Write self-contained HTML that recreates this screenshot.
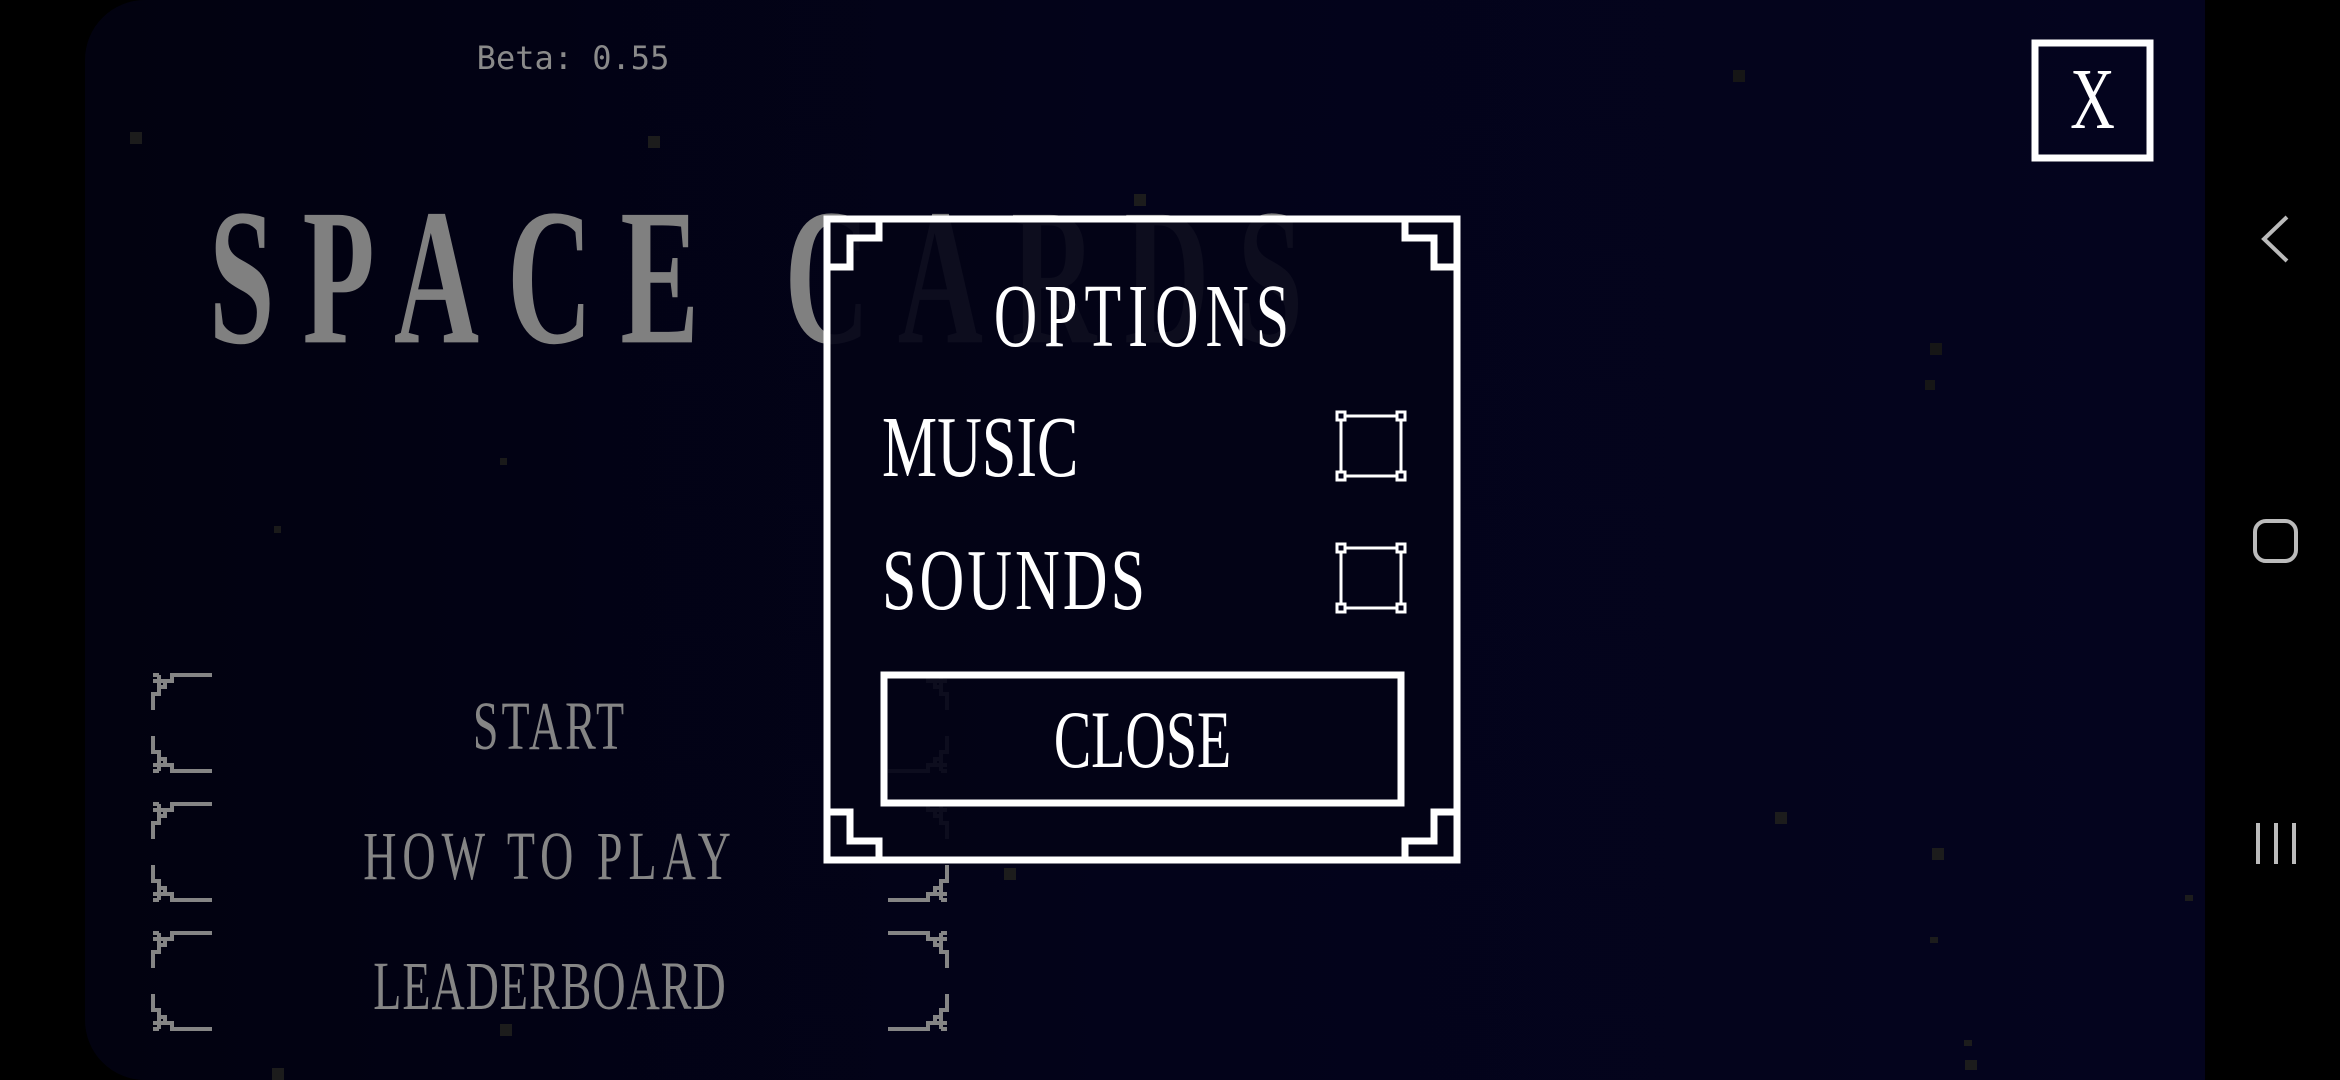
<!DOCTYPE html>
<html><head><meta charset="utf-8"><style>
*{margin:0;padding:0;box-sizing:border-box}
body{width:2340px;height:1080px;background:#000;position:relative;overflow:hidden;font-family:"Liberation Serif",serif}
#game{position:absolute;left:85px;top:0;width:2120px;height:1080px;background:linear-gradient(90deg,#020210 0%,#03031a 50%,#04041e 100%);border-radius:60px 0 0 60px}
.t{position:absolute;display:flex;align-items:center;justify-content:center;white-space:nowrap}
.t span{display:inline-block}
.star{position:absolute;background:#222;width:8px;height:8px}
</style></head><body>
<div id="game"></div>
<div class="star" style="left:130px;top:132px;width:12px;height:12px;background:#1c1c1c"></div>
<div class="star" style="left:648px;top:136px;width:12px;height:12px;background:#1c1c1c"></div>
<div class="star" style="left:1134px;top:194px;width:12px;height:12px;background:#1c1c1c"></div>
<div class="star" style="left:1733px;top:70px;width:12px;height:12px;background:#161616"></div>
<div class="star" style="left:1930px;top:343px;width:12px;height:12px;background:#161616"></div>
<div class="star" style="left:1925px;top:380px;width:10px;height:10px;background:#161616"></div>
<div class="star" style="left:274px;top:526px;width:7px;height:7px;background:#1a1a1a"></div>
<div class="star" style="left:500px;top:458px;width:7px;height:7px;background:#1a1a1a"></div>
<div class="star" style="left:1775px;top:812px;width:12px;height:12px;background:#1c1c1c"></div>
<div class="star" style="left:1932px;top:848px;width:12px;height:12px;background:#1c1c1c"></div>
<div class="star" style="left:1004px;top:868px;width:12px;height:12px;background:#1c1c1c"></div>
<div class="star" style="left:500px;top:1024px;width:12px;height:12px;background:#1c1c1c"></div>
<div class="star" style="left:272px;top:1068px;width:12px;height:12px;background:#1c1c1c"></div>
<div class="star" style="left:2185px;top:895px;width:8px;height:6px;background:#1c1c1c"></div>
<div class="star" style="left:1965px;top:1060px;width:12px;height:10px;background:#1c1c1c"></div>
<div class="star" style="left:1930px;top:937px;width:8px;height:6px;background:#1c1c1c"></div>
<div class="star" style="left:1964px;top:1040px;width:8px;height:6px;background:#1c1c1c"></div>

<div class="t" style="left:373px;top:38px;width:400px;height:40px;color:#8a8a8a;font-family:'DejaVu Sans Mono','Liberation Mono',monospace;font-size:32px">Beta: 0.55</div>

<div class="t" style="left:100px;top:218px;width:1340px;height:120px;color:#808080;font-size:118px;font-weight:bold;letter-spacing:28px"><span style="transform:scaleY(1.65)">SPACE CARDS</span></div>

<!-- menu -->
<div class="t" style="left:300px;top:700px;width:500px;height:50px;color:#858585;font-size:46px;letter-spacing:3px"><span style="transform:scaleY(1.5)">START</span></div>
<div class="t" style="left:250px;top:830px;width:600px;height:50px;color:#858585;font-size:46px;letter-spacing:6px"><span style="transform:scaleY(1.5)">HOW TO PLAY</span></div>
<div class="t" style="left:250px;top:960px;width:600px;height:50px;color:#858585;font-size:46px;letter-spacing:1px"><span style="transform:scaleY(1.5)">LEADERBOARD</span></div>

<svg style="position:absolute;left:0;top:0" width="2340" height="1080">
<defs><path id="bk" d="M62 3 H22 V9 H15 V15 H9 V22 H3 V38 M3 9 H15 M9 3 V15 M3 3 H9" fill="none" stroke="#858585" stroke-width="4"/></defs>
<g><use href="#bk" transform="translate(150,672)"/><use href="#bk" transform="translate(150,774) scale(1,-1)"/>
<use href="#bk" transform="translate(950,672) scale(-1,1)"/><use href="#bk" transform="translate(950,774) scale(-1,-1)"/></g>
<g><use href="#bk" transform="translate(150,801)"/><use href="#bk" transform="translate(150,903) scale(1,-1)"/>
<use href="#bk" transform="translate(950,801) scale(-1,1)"/><use href="#bk" transform="translate(950,903) scale(-1,-1)"/></g>
<g><use href="#bk" transform="translate(150,930)"/><use href="#bk" transform="translate(150,1032) scale(1,-1)"/>
<use href="#bk" transform="translate(950,930) scale(-1,1)"/><use href="#bk" transform="translate(950,1032) scale(-1,-1)"/></g>

<!-- dialog -->
<rect x="827" y="219" width="630" height="641" fill="rgba(3,3,22,0.92)"/>
<g fill="none" stroke="#fff" stroke-width="7">
<rect x="827" y="219" width="630" height="641"/>
<path d="M879 219 V238 H850 V267 H827"/>
<path d="M1405 219 V238 H1434 V267 H1457"/>
<path d="M879 860 V841 H850 V812 H827"/>
<path d="M1405 860 V841 H1434 V812 H1457"/>
<rect x="884" y="675" width="517" height="128"/>
</g>
<g fill="none" stroke="#fff" stroke-width="3">
<rect x="1341" y="416" width="60" height="60"/>
<rect x="1341" y="548" width="60" height="60"/>
</g>
<g fill="#03031a" stroke="#fff" stroke-width="3">
<rect x="1337" y="412" width="8" height="8"/><rect x="1397" y="412" width="8" height="8"/><rect x="1337" y="472" width="8" height="8"/><rect x="1397" y="472" width="8" height="8"/>
<rect x="1337" y="544" width="8" height="8"/><rect x="1397" y="544" width="8" height="8"/><rect x="1337" y="604" width="8" height="8"/><rect x="1397" y="604" width="8" height="8"/>
</g>
<rect x="2035" y="43" width="115" height="115" fill="none" stroke="#fff" stroke-width="7"/>
<path d="M2287 217 L2264 239 L2287 261" fill="none" stroke="#bbb" stroke-width="4"/>
<rect x="2255" y="521" width="41" height="40" rx="11" fill="none" stroke="#bbb" stroke-width="4"/>
<g stroke="#bbb" stroke-width="4"><path d="M2258 823 V864 M2276 823 V864 M2294 823 V864"/></g>
</svg>

<div class="t" style="left:880px;top:286px;width:530px;height:60px;color:#fff;font-size:60px;letter-spacing:7px"><span style="transform:scaleY(1.5)">OPTIONS</span></div>
<div class="t" style="left:882px;top:418px;height:60px;justify-content:flex-start;color:#fff;font-size:62px"><span style="transform:scaleY(1.4)">MUSIC</span></div>
<div class="t" style="left:882px;top:551px;height:60px;justify-content:flex-start;color:#fff;font-size:62px;letter-spacing:3px"><span style="transform:scaleY(1.4)">SOUNDS</span></div>
<div class="t" style="left:884px;top:713px;width:517px;height:56px;color:#fff;font-size:56px"><span style="transform:scaleY(1.45)">CLOSE</span></div>
<div class="t" style="left:2035px;top:70px;width:115px;height:60px;color:#fff;font-size:62px"><span style="transform:scaleY(1.4)">X</span></div>
</body></html>
